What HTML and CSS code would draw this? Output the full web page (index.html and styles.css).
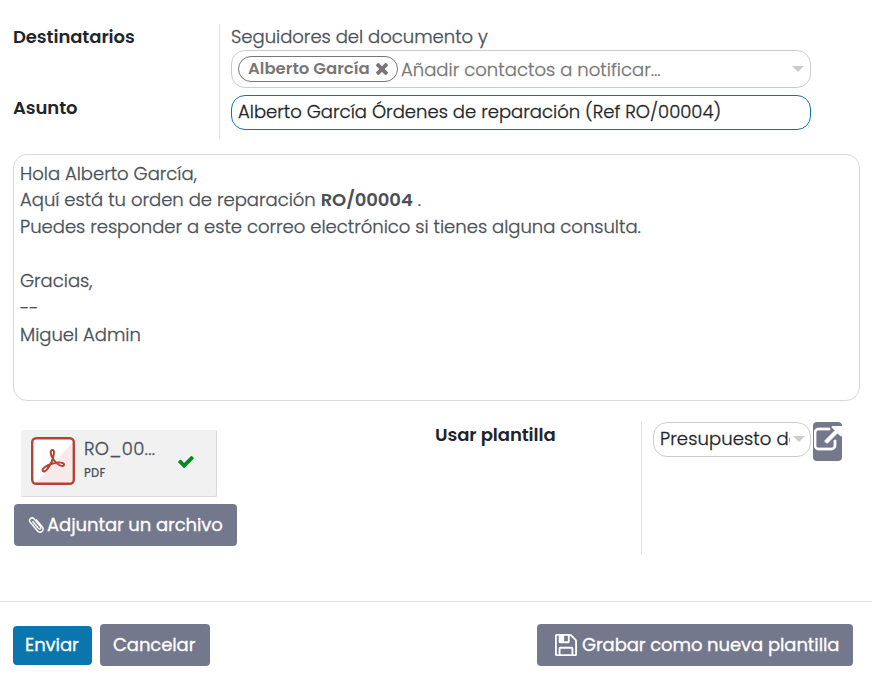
FILE: index.html
```html
<!DOCTYPE html>
<html lang="es">
<head>
<meta charset="utf-8">
<title>Enviar por correo</title>
<link rel="stylesheet" href="styles.css">
</head>
<body>
<main class="composer">
  <section class="fields">
    <div class="labels">
      <label class="label label-to">Destinatarios</label>
      <label class="label">Asunto</label>
    </div>
    <div class="values">
      <div class="followers">Seguidores del documento y</div>
      <div class="input recipients">
        <span class="tag"><span class="tag-name">Alberto García</span>
          <svg class="icon-times" viewBox="300 370 1192 1192"><path d="M1490 1322q0 40-28 68l-136 136q-28 28-68 28t-68-28l-294-294-294 294q-28 28-68 28t-68-28l-136-136q-28-28-28-68t28-68l294-294-294-294q-28-28-28-68t28-68l136-136q28-28 68-28t68 28l294 294 294-294q28-28 68-28t68 28l136 136q28 28 28 68t-28 68l-294 294 294 294q28 28 28 68z"/></svg></span>
        <span class="placeholder">Añadir contactos a notificar...</span>
        <span class="caret"></span>
      </div>
      <div class="input subject">Alberto García Órdenes de reparación (Ref RO/00004)</div>
    </div>
  </section>

  <section class="editor">
    <p class="greeting">Hola Alberto García,</p>
    <p>Aquí está tu orden de reparación <b>RO/00004</b> .</p>
    <p>Puedes responder a este correo electrónico si tienes alguna consulta.</p>
    <p><br></p>
    <p>Gracias,</p>
    <p>--</p>
    <p>Miguel Admin</p>
  </section>

  <section class="extras">
    <div class="attachments">
      <div class="file">
        <svg class="pdf" viewBox="0 0 44 48"><rect x="1.200" y="1.200" width="41.600" height="45.600" rx="4" fill="#fff"/><path d="M42 5V43Q42 46 39 46H5Z" fill="#f6eaea"/><rect x="1.200" y="1.200" width="41.600" height="45.600" rx="4" fill="none" stroke="#b64235" stroke-width="2.400"/><path d="M12 34C10 32 15 29 20 27C27 25 34 25 33 28C32 31 25 27 22 22C19 17 19 13 21.500 13C24 13 23 18 21 24C18 31 14 36 12 34Z" fill="none" stroke="#b64235" stroke-width="2" stroke-linejoin="round"/></svg>
        <div class="file-info"><span class="file-name">RO_00...</span><span class="file-type">PDF</span></div>
        <svg class="icon-check" viewBox="121 334 1550 1188"><path d="M1671 566q0 40-28 68l-724 724-136 136q-28 28-68 28t-68-28l-136-136-362-362q-28-28-28-68t28-68l136-136q28-28 68-28t68 28l294 295 656-657q28-28 68-28t68 28l136 136q28 28 28 68z"/></svg>
      </div>
      <button class="btn attach"><svg class="icon-clip" viewBox="0 0 16 18"><path d="M4.500 5.200L10.300 12.300Q11.600 13.500 12.500 12.500Q13.300 11.500 12.300 10.200L6.200 3Q4.300 1 2.500 2.500Q.700 4.200 2.300 6.300L9.300 14.800Q11.800 17.400 14 15.400Q16.200 13.200 14 10.600L8 3.500"/></svg><span>Adjuntar un archivo</span></button>
    </div>
    <label class="label template-label">Usar plantilla</label>
    <div class="template">
      <div class="input select"><span class="select-text">Presupuesto de</span><span class="caret"></span></div>
      <button class="open"><svg class="icon-open" viewBox="0 0 1792 1792"><path d="M1408 928v320q0 119-84.500 203.500t-203.500 84.500h-832q-119 0-203.500-84.500t-84.500-203.500v-832q0-119 84.500-203.500t203.500-84.500h704q14 0 23 9t9 23v64q0 14-9 23t-23 9h-704q-66 0-113 47t-47 113v832q0 66 47 113t113 47h832q66 0 113-47t47-113v-320q0-14 9-23t23-9h64q14 0 23 9t9 23zm384-864v512q0 26-19 45t-45 19-45-19l-176-176-652 652q-10 10-23 10t-23-10l-114-114q-10-10-10-23t10-23l652-652-176-176q-19-19-19-45t19-45 45-19h512q26 0 45 19t19 45z"/></svg></button>
    </div>
  </section>

  <footer class="actions">
    <button class="btn send"><span>Enviar</span></button>
    <button class="btn cancel"><span>Cancelar</span></button>
    <button class="btn save"><svg class="icon-save" viewBox="128 128 1536 1536"><path d="M512 1536h768v-384h-768v384zm896 0h128v-896q0-14-10-38.500t-20-34.500l-281-281q-10-10-34-20t-39-10v416q0 40-28 68t-68 28h-576q-40 0-68-28t-28-68v-416h-128v1280h128v-416q0-40 28-68t68-28h832q40 0 68 28t28 68v416zm-384-928v-320q0-13-9.500-22.500t-22.500-9.500h-192q-13 0-22.500 9.500t-9.500 22.500v320q0 13 9.500 22.500t22.500 9.500h192q13 0 22.500-9.500t9.500-22.500zm640 32v928q0 40-28 68t-68 28h-1344q-40 0-68-28t-28-68v-1344q0-40 28-68t68-28h928q40 0 88 20t76 48l280 280q28 28 48 76t20 88z"/></svg><span>Grabar como nueva plantilla</span></button>
  </footer>
</main>
</body>
</html>
```
FILE: styles.css
```css
* { box-sizing: border-box; }
body { margin: 0; background: #fff; color: #495057; font-family: Poppins, Inter, sans-serif; font-size: 18px; font-weight: 300; line-height: 27px; white-space: nowrap; -webkit-text-stroke: .3px; }
svg { display: block; flex: none; }
.composer { width: 872px; height: 689px; padding-top: 24px; overflow: hidden; }
.fields { display: flex; height: 115px; margin-left: 13px; }
.labels { width: 207px; border-right: 1px solid #dee2e6; }
.label { display: block; color: #212529; font-weight: 600; -webkit-text-stroke: 0; letter-spacing: -.08px; line-height: 25px; }
.label-to { margin-bottom: 46px; }
.values { width: 580px; margin-left: 11px; }
.followers { height: 26px; line-height: 25px; }
.input { display: flex; align-items: center; border: 1px solid #ccc; border-radius: 14px; background: #fff; }
.recipients { height: 38px; padding: 0 6px; }
.tag { display: flex; align-items: center; height: 26px; width: 160px; padding: 0 9px; border: 1px solid #777; border-radius: 13px; color: #777; font-size: 16.5px; font-weight: 600; -webkit-text-stroke: 0; justify-content: space-between; }
.tag-name { padding-bottom: 2px; }
.icon-times { width: 12px; height: 12px; fill: #777; }
.placeholder { color: #777; margin: 1px 0 0 3px; flex: 1; letter-spacing: .03px; }
.caret { width: 0; height: 0; border: 6px solid transparent; border-top: 6px solid #ccc; border-bottom: 0; flex: none; }
.subject { height: 35px; margin-top: 7px; padding: 0 6px 2px; border-color: #0a76ad; color: #212529; letter-spacing: .02px; }
.editor { width: 847px; height: 247px; margin: 15px 0 0 13px; padding: 5px 6px; border: 1px solid #d9d9d9; border-radius: 14px; }
.editor p { margin: 0; }
.editor .greeting { height: 26px; }
.editor b { font-weight: 600; -webkit-text-stroke: 0; letter-spacing: -.1px; }
.extras { display: flex; height: 132px; margin: 21px 0 0 14px; }
.attachments { width: 421px; }
.file { display: flex; width: 196px; height: 67px; margin: 8px 0 7px 7px; padding: 7px 10px; background: #f1f1f1; border: solid #d9d9d9; border-width: 0 1px 1px 0; border-radius: 2px; }
.pdf { width: 44px; height: 48px; }
.file-info { display: flex; flex-direction: column; width: 94px; margin-left: 9px; }
.file-name { height: 24px; line-height: 24px; letter-spacing: .3px; }
.file-type { font-size: 11.500px; line-height: 24px; font-weight: 500; letter-spacing: .2px; -webkit-text-stroke: 0; }
.icon-check { width: 16px; height: 12px; margin-top: 19px; fill: #008a20; }
.btn { display: flex; align-items: center; height: 42px; border: 0; border-radius: 4px; background: #74788d; color: #fff; font: inherit; font-weight: 400; padding: 0; letter-spacing: -.08px; }
.btn span { padding-bottom: 2px; }
.attach { width: 223px; padding-left: 14px; }
.icon-clip { width: 16px; height: 18px; margin-right: 3px; fill: none; stroke: #fff; stroke-width: 1.5; }
.template-label { width: 207px; border-right: 1px solid #dee2e6; }
.template { display: flex; margin-left: 11px; gap: 2px; align-items: flex-start; }
.select { width: 158px; height: 35px; padding: 0 5px 2px 6px; color: #212529; justify-content: space-between; }
.select-text { width: 130px; overflow: hidden; letter-spacing: .1px; }
.open { display: flex; align-items: flex-start; width: 29px; height: 39px; border: 0; border-radius: 4px; background: #74788d; padding: 4px 0 0 1px; }
.icon-open { width: 28px; height: 28px; fill: #fff; stroke: #fff; stroke-width: 50; }
.actions { display: flex; align-items: center; height: 87px; margin-top: 47px; border-top: 1px solid #dee2e6; padding: 0 19px 0 13px; }
.send { width: 79px; height: 39px; background: #0a76ad; padding-left: 12px; }
.cancel { width: 110px; margin-left: 8px; padding-left: 13px; }
.save { width: 316px; margin-left: auto; padding-left: 18px; }
.icon-save { width: 22px; height: 22px; margin-right: 5px; fill: #fff; }
```
